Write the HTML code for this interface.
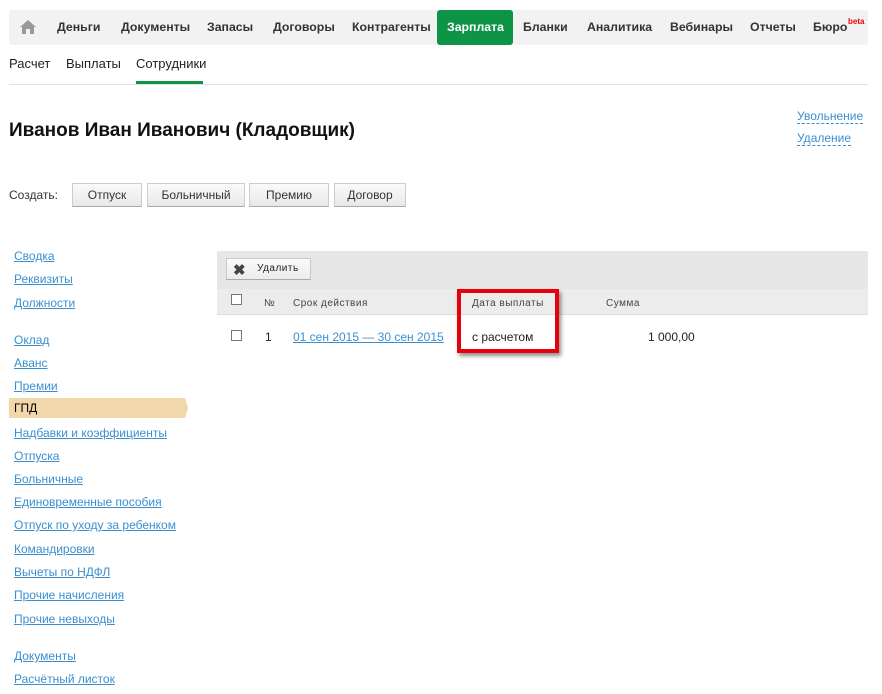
<!DOCTYPE html>
<html><head><meta charset="utf-8"><style>
*{margin:0;padding:0;box-sizing:border-box}
body{width:882px;height:694px;background:#fff;font-family:"Liberation Sans",Arial,sans-serif;position:relative;overflow:hidden;color:#222}
.a{position:absolute;white-space:nowrap}
.nav{left:9px;top:10px;width:859px;height:35px;background:#f2f2f2;border-radius:3px}
.ni{top:20px;font-size:12.3px;font-weight:bold;color:#333}
.sub{top:56px;font-size:13px;color:#222}
.btn{top:183px;height:24px;border:1px solid #ccc;border-bottom-color:#aaa;background:linear-gradient(#fafafa,#e8e8e8);font-size:12px;color:#333;text-align:center;line-height:22px}
.sl{left:14px;font-size:12px;color:#3a8fd0;text-decoration:underline}
.dl{left:797px;font-size:12px;color:#3a8fd0;border-bottom:1px dashed #3a8fd0;line-height:14px}
.th{top:298px;font-size:10px;color:#444;letter-spacing:.5px}
.cb{width:11px;height:11px;border:1px solid #777;background:#fff}
</style></head><body>
<div class="a nav"></div>
<svg class="a" style="left:19px;top:19px" width="18" height="16" viewBox="0 0 18 16"><path d="M9 1 L1 8 H3 V15 H7 V10 H11 V15 H15 V8 H17 Z" fill="#999"/></svg>
<div class="a ni" style="left:57px">Деньги</div>
<div class="a ni" style="left:121px">Документы</div>
<div class="a ni" style="left:207px">Запасы</div>
<div class="a ni" style="left:273px">Договоры</div>
<div class="a ni" style="left:352px">Контрагенты</div>
<div class="a" style="left:437px;top:10px;width:76px;height:35px;background:#0e9447;border-radius:3px"></div>
<div class="a ni" style="left:447px;color:#fff">Зарплата</div>
<div class="a ni" style="left:523px">Бланки</div>
<div class="a ni" style="left:587px">Аналитика</div>
<div class="a ni" style="left:670px">Вебинары</div>
<div class="a ni" style="left:750px">Отчеты</div>
<div class="a ni" style="left:813px">Бюро</div>
<div class="a" style="left:848px;top:17px;font-size:8px;color:#e00;font-weight:bold">beta</div>
<div class="a sub" style="left:9px">Расчет</div>
<div class="a sub" style="left:66px">Выплаты</div>
<div class="a sub" style="left:136px">Сотрудники</div>
<div class="a" style="left:9px;top:84px;width:859px;height:1px;background:#e2e2e2"></div>
<div class="a" style="left:136px;top:81px;width:67px;height:3px;background:#0e9447"></div>
<div class="a" style="left:9px;top:120px;font-size:19px;font-weight:bold;color:#111">Иванов Иван Иванович (Кладовщик)</div>
<div class="a dl" style="top:109px">Увольнение</div>
<div class="a dl" style="top:131px">Удаление</div>
<div class="a" style="left:9px;top:188px;font-size:12px;color:#333">Создать:</div>
<div class="a btn" style="left:72px;width:70px">Отпуск</div>
<div class="a btn" style="left:147px;width:98px">Больничный</div>
<div class="a btn" style="left:249px;width:80px">Премию</div>
<div class="a btn" style="left:334px;width:72px">Договор</div>
<div class="a sl" style="top:249px">Сводка</div>
<div class="a sl" style="top:272px">Реквизиты</div>
<div class="a sl" style="top:296px">Должности</div>
<div class="a sl" style="top:333px">Оклад</div>
<div class="a sl" style="top:356px">Аванс</div>
<div class="a sl" style="top:379px">Премии</div>
<svg class="a" style="left:9px;top:398px" width="180" height="20"><path d="M0 0H176L179 10L176 20H0Z" fill="#f2d7aa"/></svg>
<div class="a" style="left:14px;top:401px;font-size:12px;color:#000">ГПД</div>
<div class="a sl" style="top:426px">Надбавки и коэффициенты</div>
<div class="a sl" style="top:449px">Отпуска</div>
<div class="a sl" style="top:472px">Больничные</div>
<div class="a sl" style="top:495px">Единовременные пособия</div>
<div class="a sl" style="top:518px">Отпуск по уходу за ребенком</div>
<div class="a sl" style="top:542px">Командировки</div>
<div class="a sl" style="top:565px">Вычеты по НДФЛ</div>
<div class="a sl" style="top:588px">Прочие начисления</div>
<div class="a sl" style="top:612px">Прочие невыходы</div>
<div class="a sl" style="top:649px">Документы</div>
<div class="a sl" style="top:672px">Расчётный листок</div>
<div class="a" style="left:217px;top:251px;width:651px;height:38px;background:#e6e6e6"></div>
<div class="a" style="left:226px;top:258px;width:85px;height:22px;border:1px solid #c8c8c8;border-bottom-color:#aaa;background:linear-gradient(#fafafa,#ececec)"></div>
<div class="a" style="left:233px;top:261px;font-size:15px;font-weight:bold;color:#444">✖</div>
<div class="a" style="left:257px;top:263px;font-size:10px;color:#222;letter-spacing:.5px">Удалить</div>
<div class="a" style="left:217px;top:289px;width:651px;height:26px;background:#ececec;border-bottom:1px solid #ddd"></div>
<div class="a cb" style="left:231px;top:294px"></div>
<div class="a th" style="left:264px">№</div>
<div class="a th" style="left:293px">Срок действия</div>
<div class="a th" style="left:472px">Дата выплаты</div>
<div class="a th" style="left:606px">Сумма</div>
<div class="a cb" style="left:231px;top:330px"></div>
<div class="a" style="left:265px;top:330px;font-size:12px">1</div>
<div class="a" style="left:293px;top:330px;font-size:12px;color:#3a8fd0;text-decoration:underline">01 сен 2015 — 30 сен 2015</div>
<div class="a" style="left:472px;top:330px;font-size:12px">с расчетом</div>
<div class="a" style="left:648px;top:330px;font-size:12px">1 000,00</div>
<div class="a" style="left:457px;top:289px;width:102px;height:64px;border:4px solid #e8000b;box-shadow:2px 3px 4px rgba(0,0,0,.45)"></div>
</body></html>
